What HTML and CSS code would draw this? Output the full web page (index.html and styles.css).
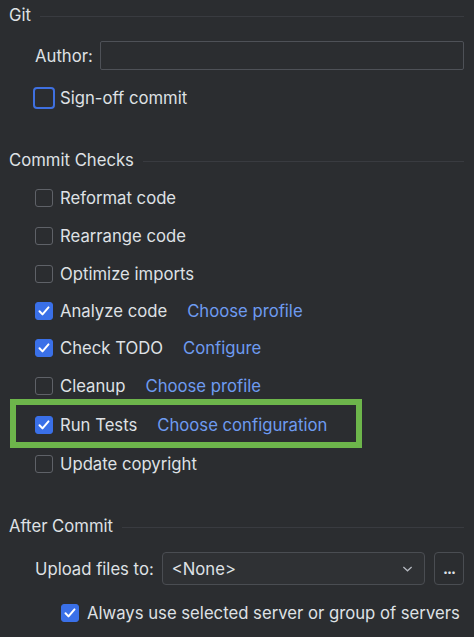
FILE: index.html
```html
<!DOCTYPE html>
<html>
<head>
  <title>Commit settings</title>
  <meta charset="UTF-8">
  <link rel="stylesheet" href="styles.css">
</head>
<body>
  <div class="panel">
    <div class="group-title">
      <span>Git</span>
      <div class="sep"></div>
    </div>

    <div class="field-row author-row">
      <label class="field-label" for="author">Author:</label>
      <input type="text" id="author" class="text-input">
    </div>

    <div class="check-row signoff-row">
      <span class="box focused"></span>
      <span>Sign-off commit</span>
    </div>

    <div class="group-title checks-title">
      <span>Commit Checks</span>
      <div class="sep"></div>
    </div>

    <div class="checks">
      <div class="check-row"><span class="box"></span><span>Reformat code</span></div>
      <div class="check-row"><span class="box"></span><span>Rearrange code</span></div>
      <div class="check-row short"><span class="box"></span><span>Optimize imports</span></div>
      <div class="check-row short">
        <span class="box checked"><svg viewBox="0 0 18 18"><path d="M4.5 9.3l3 3.1 6-7"/></svg></span>
        <span>Analyze code</span><a class="link">Choose profile</a>
      </div>
      <div class="check-row">
        <span class="box checked"><svg viewBox="0 0 18 18"><path d="M4.5 9.3l3 3.1 6-7"/></svg></span>
        <span>Check TODO</span><a class="link">Configure</a>
      </div>
      <div class="check-row">
        <span class="box"></span>
        <span>Cleanup</span><a class="link">Choose profile</a>
      </div>
      <div class="check-row tall highlighted">
        <span class="box checked"><svg viewBox="0 0 18 18"><path d="M4.5 9.3l3 3.1 6-7"/></svg></span>
        <span>Run Tests</span><a class="link">Choose configuration</a>
      </div>
      <div class="check-row tall"><span class="box"></span><span>Update copyright</span></div>
    </div>

    <div class="group-title after-title">
      <span>After Commit</span>
      <div class="sep"></div>
    </div>

    <div class="field-row upload-row">
      <span class="field-label">Upload files to:</span>
      <div class="combo">
        <span>&lt;None&gt;</span>
        <svg class="chevron" viewBox="0 0 12 8"><path d="M1.5 1.8l4.5 4.2 4.5-4.2"/></svg>
      </div>
      <div class="dots-btn">...</div>
    </div>

    <div class="check-row always-row">
      <span class="box checked"><svg viewBox="0 0 18 18"><path d="M4.5 9.3l3 3.1 6-7"/></svg></span>
      <span>Always use selected server or group of servers</span>
    </div>
  </div>
</body>
</html>
```

FILE: styles.css
```css
body {
  margin: 0;
  background-color: #2b2d30;
  color: #dfe1e5;
  font-family: Inter, "Noto Sans", sans-serif;
  font-size: 16.7px;
}

.panel {
  width: 474px;
  height: 637px;
  overflow: hidden;
  padding: 0 10px 0 9px;
  box-sizing: border-box;
}

.group-title {
  display: flex;
  align-items: center;
  height: 30px;
}

.sep {
  flex: 1;
  height: 1px;
  margin-left: 9px;
  margin-top: 2px;
  background-color: #393b40;
}

.checks-title {
  margin-top: 36px;
}

.after-title {
  margin-top: 28px;
}

.field-row {
  display: flex;
  align-items: center;
  padding-left: 26px;
}

.author-row {
  margin-top: 11px;
}

.field-label {
  margin-right: 7px;
}

.text-input {
  flex: 1;
  height: 29px;
  box-sizing: border-box;
  background-color: #2b2d30;
  border: 1px solid #4e5157;
  border-radius: 2px;
  color: #dfe1e5;
  font: inherit;
}

.check-row {
  display: flex;
  align-items: center;
  height: 38px;
  padding-left: 26px;
  white-space: nowrap;
}

.check-row.short {
  height: 37px;
}

.check-row.tall {
  height: 39px;
}

.signoff-row {
  height: 22px;
  margin-top: 17px;
}

.checks {
  margin-top: 4px;
}

.box {
  width: 18px;
  height: 18px;
  box-sizing: border-box;
  border: 1px solid #5f6268;
  border-radius: 3px;
  margin-right: 7px;
  flex-shrink: 0;
}

.box.focused {
  width: 22px;
  height: 22px;
  margin-left: -2px;
  margin-right: 5px;
  border: 2px solid #3f70e0;
  border-radius: 4px;
}

.box.checked {
  background-color: #3a70e8;
  border-color: #3a70e8;
  position: relative;
}

.box svg {
  position: absolute;
  left: -1px;
  top: -1px;
  width: 18px;
  height: 18px;
}

.box svg path {
  fill: none;
  stroke: #fff;
  stroke-width: 2;
  stroke-linecap: round;
  stroke-linejoin: round;
}

.link {
  color: #6e9bf0;
  margin-left: 20px;
}

.highlighted {
  position: relative;
}

.highlighted::after {
  content: "";
  position: absolute;
  left: 1px;
  top: -6px;
  width: 352px;
  height: 49px;
  box-sizing: border-box;
  border: 6px solid #6db54b;
}

.upload-row {
  margin-top: 11px;
}

.upload-row .field-label {
  margin-right: 8px;
}

.combo {
  flex: 1;
  height: 33px;
  box-sizing: border-box;
  display: flex;
  align-items: center;
  justify-content: space-between;
  padding: 0 11px 0 9px;
  background-color: #2f3134;
  border: 1px solid #4a4d52;
  border-radius: 4px;
}

.chevron {
  width: 11px;
  height: 8px;
}

.chevron path {
  fill: none;
  stroke: #b4b8bf;
  stroke-width: 1.4;
}

.dots-btn {
  width: 30px;
  height: 33px;
  box-sizing: border-box;
  margin-left: 9px;
  border: 1px solid #4a4d52;
  border-radius: 4px;
  text-align: center;
  line-height: 32px;
  font-size: 15px;
  font-weight: bold;
  letter-spacing: -1px;
}

.always-row {
  height: 19px;
  margin-top: 18px;
  padding-left: 52px;
}

.always-row .box {
  margin-right: 8px;
}
```
